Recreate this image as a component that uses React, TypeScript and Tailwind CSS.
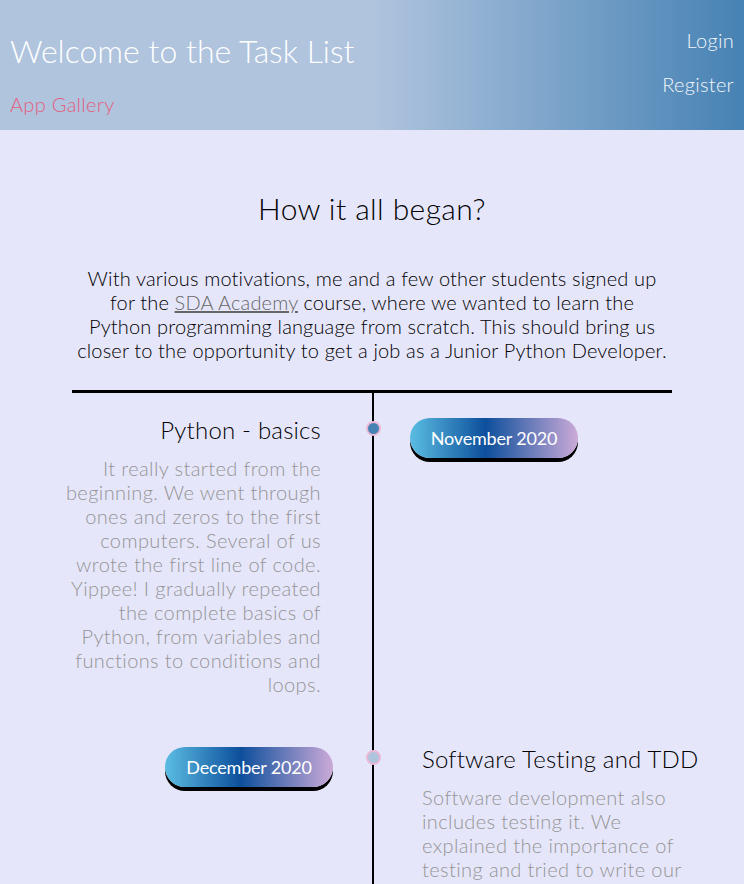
import React from "react";

type Item = {
  side: "left" | "right";
  title: string;
  text: string;
  date: string;
  dot: string;
};

const items: Item[] = [
  {
    side: "left",
    title: "Python - basics",
    text: "It really started from the beginning. We went through ones and zeros to the first computers. Several of us wrote the first line of code. Yippee! I gradually repeated the complete basics of Python, from variables and functions to conditions and loops.",
    date: "November 2020",
    dot: "bg-[#4682b4]",
  },
  {
    side: "right",
    title: "Software Testing and TDD",
    text: "Software development also includes testing it. We explained the importance of testing and tried to write our first tests in Python.",
    date: "December 2020",
    dot: "bg-[#b0c4de]",
  },
];

function DatePill({ label }: { label: string }) {
  return (
    <div className="inline-flex h-[40px] w-[168px] items-center justify-center rounded-full bg-[linear-gradient(to_right,#5bbde2,#0d4f9c_45%,#cbaad8)] text-[18px] font-normal tracking-[-0.2px] text-white shadow-[0_4px_0_#000]">
      {label}
    </div>
  );
}

function Row({ item }: { item: Item }) {
  const content = (
    <div className={item.side === "left" ? "w-[258px] shrink-0 text-right" : "ml-[48px] w-[264px]"}>
      <h3 className="whitespace-nowrap text-[24px] leading-[29px] tracking-[0.2px] text-black">{item.title}</h3>
      <p className="mt-[12px] text-[20px] leading-[24px] tracking-[0.4px] text-[#959595]">{item.text}</p>
    </div>
  );
  const pill = (
    <div className={item.side === "left" ? "pl-[36px] pt-[3px]" : "flex justify-end pr-[39px] pt-[3px]"}>
      <DatePill label={item.date} />
    </div>
  );
  return (
    <div className="relative grid grid-cols-2">
      <div className={item.side === "left" ? "flex justify-end pr-[51px] pt-[22px] pb-[26px]" : "pt-[22px] pb-[26px]"}>
        {item.side === "left" ? content : pill}
      </div>
      <div className="border-l-2 border-black pt-[22px] pb-[26px]">{item.side === "left" ? pill : content}</div>
      <span
        className={`absolute left-[294px] top-[28px] h-[15px] w-[15px] rounded-full border-2 border-[#eab8d6] ${item.dot}`}
      />
    </div>
  );
}

export default function App() {
  return (
    <div className="min-h-screen bg-[#e6e6fa] font-['Lato',sans-serif] font-light">
      <header className="flex h-[130px] justify-between bg-[linear-gradient(to_right,#b0c4de_50%,#4682b4)] px-[10px]">
        <div>
          <h1 className="pt-[32px] text-[32px] leading-[38px] text-white">Welcome to the Task List</h1>
          <a className="mt-[22px] block text-[20px] leading-[24px] tracking-[0.3px] text-[#e3607f]">App Gallery</a>
        </div>
        <nav className="flex flex-col items-end pt-[28px] text-[20px] leading-[24px] tracking-[0.3px] text-[#f2f6fb]">
          <a>Login</a>
          <a className="mt-[20px]">Register</a>
        </nav>
      </header>

      <main className="mx-auto w-[600px]">
        <h2 className="pt-[60px] text-center text-[30px] leading-[36px] tracking-[0.4px] text-black">How it all began?</h2>
        <p className="mt-[40px] whitespace-nowrap text-center text-[20px] leading-[24px] tracking-[0.15px] text-black">
          With various motivations, me and a few other students signed up
          <br />
          for the <a className="text-[#666] underline">SDA Academy</a> course, where we wanted to learn the
          <br />
          Python programming language from scratch. This should bring us
          <br />
          closer to the opportunity to get a job as a Junior Python Developer.
        </p>
        <div className="mt-[28px] border-t-[3px] border-black">
          {items.map((item) => (
            <Row key={item.title} item={item} />
          ))}
        </div>
      </main>
    </div>
  );
}
